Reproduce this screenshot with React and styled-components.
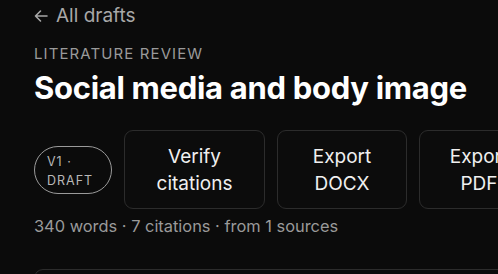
import styled, { createGlobalStyle } from "styled-components";

const GlobalStyle = createGlobalStyle`
  html, body {
    margin: 0;
    padding: 0;
    background: #0b0b0b;
  }
  body {
    font-family: Inter, "Liberation Sans", sans-serif;
    -webkit-font-smoothing: antialiased;
  }
`;

const Page = styled.div`
  width: 498px;
  height: 274px;
  overflow: hidden;
  padding: 4px 0 0 34px;
  box-sizing: border-box;
  background: #0b0b0b;
`;

const Back = styled.a`
  display: flex;
  align-items: center;
  gap: 8px;
  color: #a8a8a8;
  font-size: 19px;
  line-height: 24px;
  text-decoration: none;
`;

const Eyebrow = styled.div`
  margin-top: 17px;
  color: #9a9a9a;
  font-size: 15px;
  letter-spacing: 1.1px;
  line-height: 18px;
`;

const Title = styled.h1`
  margin: 6px 0 0;
  color: #fff;
  font-size: 31px;
  font-weight: 700;
  letter-spacing: -0.3px;
  line-height: 38px;
  white-space: nowrap;
`;

const Actions = styled.div`
  display: flex;
  align-items: center;
  gap: 12px;
  margin-top: 23px;
`;

const Pill = styled.span`
  flex: none;
  box-sizing: border-box;
  width: 78px;
  height: 48px;
  padding: 5px 0 0 12px;
  border: 1.5px solid #9a9a9a;
  border-radius: 24px;
  color: #b8b8b8;
  font-size: 12.5px;
  letter-spacing: 1px;
  line-height: 19px;
`;

const ActionButton = styled.button`
  flex: none;
  box-sizing: border-box;
  width: ${(p) => p.w}px;
  height: 79px;
  padding: 0;
  background: #0c0c0c;
  border: 1px solid #2c2c2c;
  border-radius: 9px;
  color: #f0f0f0;
  font-family: inherit;
  font-size: 19px;
  line-height: 27px;
  text-align: center;
`;

const Meta = styled.div`
  margin-top: 7px;
  color: #9a9a9a;
  font-size: 16.4px;
  line-height: 20px;
`;

const Card = styled.div`
  margin: 33px -24px 0 0;
  height: 40px;
  border: 1px solid #2c2c2c;
  border-radius: 9px;
`;

const ArrowLeft = () => (
  <svg width="14" height="14" viewBox="0 0 14 14" fill="none" stroke="#a8a8a8" strokeWidth="1.6" strokeLinecap="round" strokeLinejoin="round">
    <path d="M13 7H1.5M6.5 2L1.5 7l5 5" />
  </svg>
);

const actions = [
  { label: ["Verify", "citations"], w: 141 },
  { label: ["Export", "DOCX"], w: 130 },
  { label: ["Export", "PDF"], w: 120 },
];

export default function App() {
  return (
    <>
      <GlobalStyle />
      <Page>
        <Back href="#">
          <ArrowLeft />
          All drafts
        </Back>
        <Eyebrow>LITERATURE REVIEW</Eyebrow>
        <Title>Social media and body image</Title>
        <Actions>
          <Pill>
            V1 ·<br />
            DRAFT
          </Pill>
          {actions.map((a) => (
            <ActionButton key={a.label.join(" ")} w={a.w}>
              {a.label[0]}
              <br />
              {a.label[1]}
            </ActionButton>
          ))}
        </Actions>
        <Meta>340 words · 7 citations · from 1 sources</Meta>
        <Card />
      </Page>
    </>
  );
}
